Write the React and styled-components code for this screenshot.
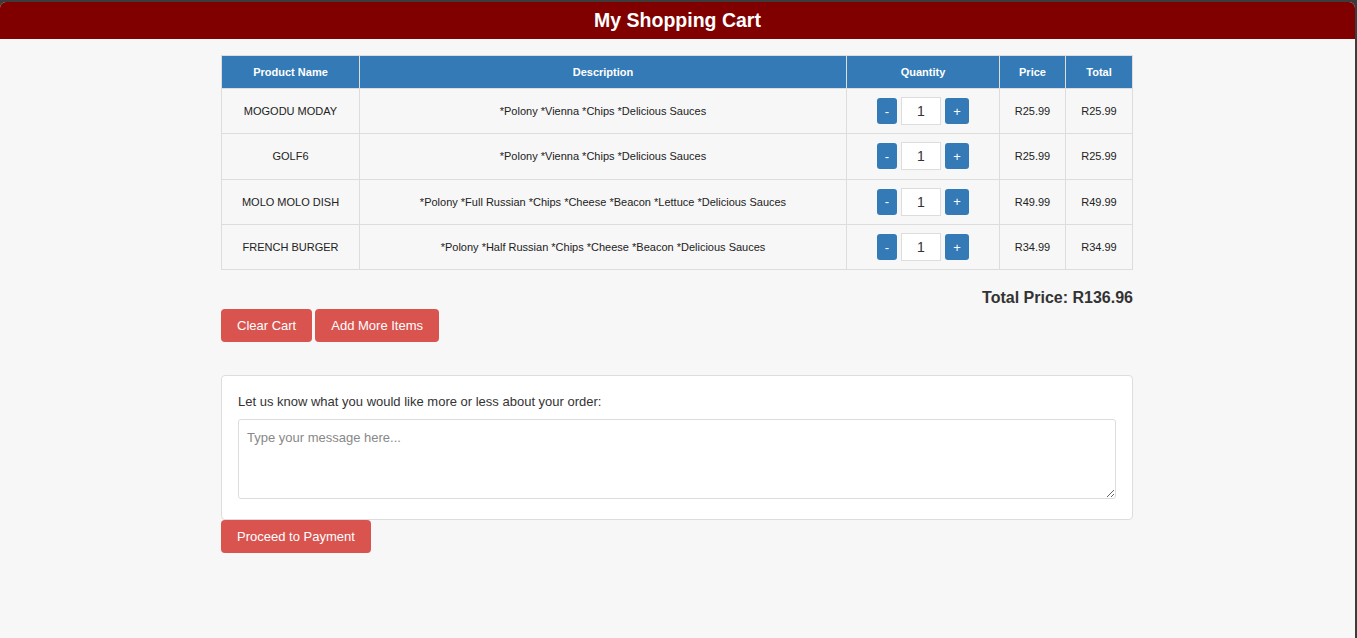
import React from 'react';
import styled, { createGlobalStyle } from 'styled-components';

const GlobalStyle = createGlobalStyle`
  html, body {
    margin: 0;
    padding: 0;
    background: #3c3c3c;
  }
  body {
    font-family: "Liberation Sans", Arial, sans-serif;
    color: #333;
  }
`

const Frame = styled.div`
  padding: 2px 2px 0 0;
  min-height: 638px;
  box-sizing: border-box;
  display: flex;
  flex-flow: column;
`

const Page = styled.div`
  flex: 1;
  background: #f7f7f7;
  border-radius: 6px 6px 0 0;
  overflow: hidden;
`

const Header = styled.div`
  background: #800000;
  height: 37px;
  display: flex;
  align-items: center;
  justify-content: center;
  color: #fff;
  font-size: 19.5px;
  font-weight: bold;
`

const Container = styled.div`
  width: 912px;
  margin: 16px 0 0 221px;
`

const Table = styled.table`
  width: 100%;
  table-layout: fixed;
  border-collapse: collapse;
  font-size: 11px;
  text-align: center;
  th, td {
    border: 1px solid #ddd;
    padding: 0;
  }
  th {
    background: #337ab7;
    color: #fff;
    font-weight: bold;
    height: 32px;
  }
  td {
    height: 44.3px;
    color: #222;
  }
`

const Col = styled.col`
  width: ${p => p.$w ? p.$w + 'px' : 'auto'};
`

const Qty = styled.div`
  display: flex;
  justify-content: center;
  align-items: center;
  gap: 4px;
`

const QtyButton = styled.button`
  background: #337ab7;
  color: #fff;
  border: none;
  border-radius: 3px;
  height: 26px;
  width: ${p => p.$wide ? '24px' : '20px'};
  font-size: 13px;
  font-family: inherit;
  padding: 0;
`

const QtyInput = styled.input`
  width: 40px;
  height: 28px;
  box-sizing: border-box;
  border: 1px solid #ddd;
  text-align: center;
  font-size: 14px;
  font-family: inherit;
  color: #333;
  padding: 0;
`

const TotalPrice = styled.div`
  text-align: right;
  font-size: 16px;
  font-weight: bold;
  margin-top: 19px;
  color: #333;
`

const Actions = styled.div`
  display: flex;
  gap: 3px;
  margin-top: 2px;
`

const Button = styled.button`
  background: #d9534f;
  color: #fff;
  border: none;
  border-radius: 4px;
  height: 33px;
  padding: 0 16px;
  font-size: 13px;
  font-family: inherit;
`

const Panel = styled.div`
  margin-top: 33px;
  background: #fff;
  border: 1px solid #ddd;
  border-radius: 4px;
  padding: 18px 16px 20px;
`

const Label = styled.div`
  font-size: 13px;
  line-height: 15px;
  color: #333;
  margin-bottom: 10px;
`

const Message = styled.textarea`
  width: 100%;
  height: 80px;
  box-sizing: border-box;
  border: 1px solid #ddd;
  border-radius: 3px;
  padding: 10px 8px;
  font-size: 13px;
  font-family: inherit;
  resize: vertical;
  display: block;
  &::placeholder {
    color: #888;
  }
`

const items = [
  { name: 'MOGODU MODAY', desc: '*Polony *Vienna *Chips *Delicious Sauces', price: 'R25.99' },
  { name: 'GOLF6', desc: '*Polony *Vienna *Chips *Delicious Sauces', price: 'R25.99' },
  { name: 'MOLO MOLO DISH', desc: '*Polony *Full Russian *Chips *Cheese *Beacon *Lettuce *Delicious Sauces', price: 'R49.99' },
  { name: 'FRENCH BURGER', desc: '*Polony *Half Russian *Chips *Cheese *Beacon *Delicious Sauces', price: 'R34.99' },
]

export default function App() {
  return (
    <Frame>
      <GlobalStyle />
      <Page>
        <Header>My Shopping Cart</Header>
        <Container>
          <Table>
            <colgroup>
              <Col $w={138} />
              <Col />
              <Col $w={153} />
              <Col $w={66} />
              <Col $w={67} />
            </colgroup>
            <thead>
              <tr>
                <th>Product Name</th>
                <th>Description</th>
                <th>Quantity</th>
                <th>Price</th>
                <th>Total</th>
              </tr>
            </thead>
            <tbody>
              {items.map(item => (
                <tr key={item.name}>
                  <td>{item.name}</td>
                  <td>{item.desc}</td>
                  <td>
                    <Qty>
                      <QtyButton>-</QtyButton>
                      <QtyInput defaultValue="1" />
                      <QtyButton $wide>+</QtyButton>
                    </Qty>
                  </td>
                  <td>{item.price}</td>
                  <td>{item.price}</td>
                </tr>
              ))}
            </tbody>
          </Table>
          <TotalPrice>Total Price: R136.96</TotalPrice>
          <Actions>
            <Button>Clear Cart</Button>
            <Button>Add More Items</Button>
          </Actions>
          <Panel>
            <Label>Let us know what you would like more or less about your order:</Label>
            <Message placeholder="Type your message here..." />
          </Panel>
          <Button>Proceed to Payment</Button>
        </Container>
      </Page>
    </Frame>
  )
}
